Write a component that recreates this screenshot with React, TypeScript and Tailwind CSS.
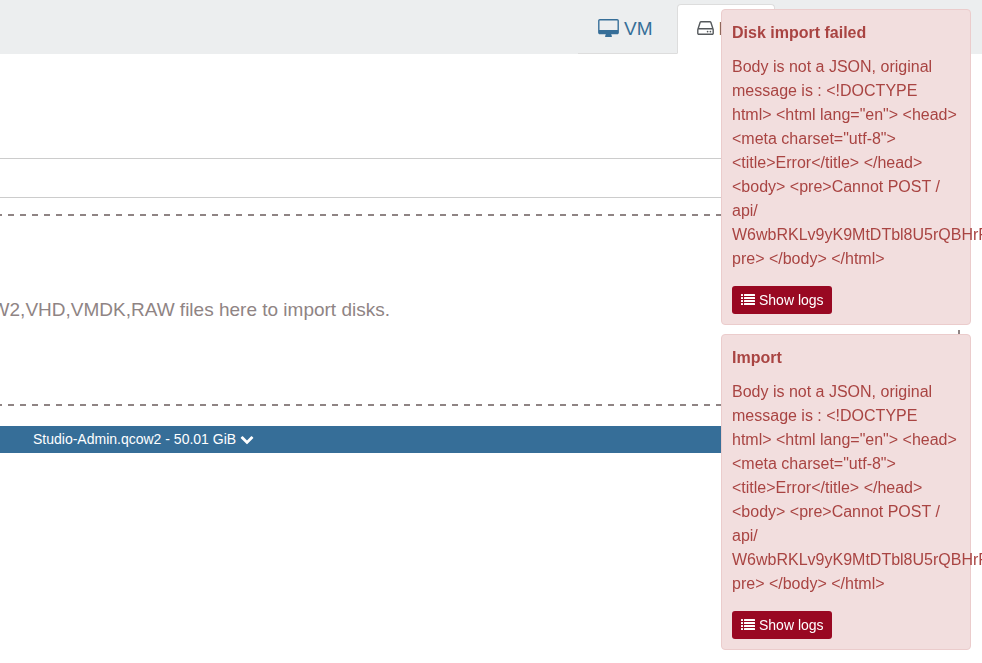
import { Fragment, useState } from "react";

const tabs = [
  { href: "#vm", label: "VM", icon: DesktopIcon },
  { href: "#disk", label: "Disk", icon: HddIcon },
] as const;

const message =
  'Body is not a JSON, original message is : <!DOCTYPE html> <html lang="en"> <head> <meta charset="utf-8"> <title>Error</title> </head> <body> <pre>Cannot POST /api/W6wbRKLv9yK9MtDTbl8U5rQBHrPcXq</pre> </body> </html>';

const notifications = [
  { title: "Disk import failed", body: message },
  { title: "Import", body: message },
];

function DesktopIcon() {
  return (
    <svg viewBox="0 0 1920 1664" className="mb-0.5 h-[18px] w-[21px]" fill="currentColor" aria-hidden="true">
      <path d="M1792 992v-832q0-13-9.5-22.5t-22.5-9.5h-1600q-13 0-22.5 9.5t-9.5 22.5v832q0 13 9.5 22.5t22.5 9.5h1600q13 0 22.5-9.5t9.5-22.5zM1920 160v1088q0 66-47 113t-113 47h-544q0 37 16 77.5t32 71 16 43.5q0 26-19 45t-45 19h-512q-26 0-45-19t-19-45q0-14 16-44t32-70 16-78h-544q-66 0-113-47t-47-113v-1088q0-66 47-113t113-47h1600q66 0 113 47t47 113z" />
    </svg>
  );
}

function HddIcon() {
  return (
    <svg viewBox="0 256 1536 1280" className="mb-0.5 h-[14px] w-[17px]" fill="currentColor" aria-hidden="true">
      <circle cx="960" cy="1216" r="80" />
      <circle cx="1216" cy="1216" r="80" />
      <path d="M1408 1376v-320q0-13-9.5-22.5t-22.5-9.5h-1216q-13 0-22.5 9.5t-9.5 22.5v320q0 13 9.5 22.5t22.5 9.5h1216q13 0 22.5-9.5t9.5-22.5zm-1230-480h1180l-157-482q-4-13-16-21.5t-26-8.5h-782q-14 0-26 8.5t-16 21.5zm1358 160v320q0 66-47 113t-113 47h-1216q-66 0-113-47t-47-113v-320q0-25 16-75l197-606q17-53 63-86t101-33h782q55 0 101 33t63 86l197 606q16 50 16 75z" />
    </svg>
  );
}

function ListIcon() {
  return (
    <svg viewBox="0 0 14 11" className="mb-0.5 h-[11px] w-[14px]" fill="currentColor" aria-hidden="true">
      {[0, 3, 6, 9].map((y) => (
        <g key={y}>
          <rect x="0" y={y} width="2" height="2" rx="0.2" />
          <rect x="3" y={y} width="11" height="2" rx="0.2" />
        </g>
      ))}
    </svg>
  );
}

function ChevronIcon() {
  return (
    <svg viewBox="0 0 1792 1792" className="size-[14px]" fill="currentColor" aria-hidden="true">
      <path d="M1683 808l-742 741q-19 19-45 19t-45-19l-742-741q-19-19-19-45.5t19-45.5l166-165q19-19 45-19t45 19l531 531 531-531q19-19 45-19t45 19l166 165q19 19 19 45.5t-19 45.5z" />
    </svg>
  );
}

function Header() {
  const [active, setActive] = useState("#disk");

  return (
    <header className="bg-[#eceeef] pt-1 pr-[22px] pl-[578px]">
      <nav className="flex gap-1 border-b border-[#dddddd]">
        {tabs.map((t) => (
          <a
            key={t.href}
            href={t.href}
            onClick={() => setActive(t.href)}
            className={`-mb-px flex h-[50px] items-center gap-[5px] rounded-t border px-[19px] text-[19px] ${
              active === t.href
                ? "border-[#dddddd] border-b-white bg-white text-[#55595c]"
                : "border-transparent text-[#366e98]"
            }`}
          >
            <t.icon />
            {t.label}
          </a>
        ))}
      </nav>
    </header>
  );
}

function Notification({ title, body }: { title: string; body: string }) {
  return (
    <section className="rounded border border-[#ebcccc] bg-[#f2dede] px-[10px] pt-[11px] pb-[10px] leading-6 text-[#a94442]">
      <h2 className="font-bold">{title}</h2>
      {/* long paths may wrap after a slash */}
      <p className="mt-[10px] mb-[15px]">
        {body.split("/").map((part, i) => (
          <Fragment key={i}>
            {i > 0 && (
              <>
                /<wbr />
              </>
            )}
            {part}
          </Fragment>
        ))}
      </p>
      <button className="flex h-7 items-center gap-1 rounded-[3px] bg-[#990822] pr-2 pl-[9px] text-sm text-white">
        <ListIcon />
        Show logs
      </button>
    </section>
  );
}

export default function App() {
  const [open, setOpen] = useState(false);

  return (
    <div className="min-h-screen overflow-hidden bg-white font-['Liberation_Sans',Arial,sans-serif] text-base">
      <Header />

      <main className="pr-[22px]">
        <div className="mt-[104px] h-10 border-y border-[#cccccc]" />

        {/* Drop zone, dashed on the top, bottom and right */}
        <div className="mt-4 flex h-48 items-center bg-[linear-gradient(90deg,#8f8484_50%,transparent_50%),linear-gradient(90deg,#8f8484_50%,transparent_50%),linear-gradient(#8f8484_50%,transparent_50%)] bg-[length:12px_2px,12px_2px,2px_12px] bg-[position:8px_0,8px_100%,100%_8px] [background-repeat:repeat-x,repeat-x,repeat-y]">
          <p className="flex w-[390px] justify-end overflow-hidden text-[19px] whitespace-nowrap text-[#8f8484]">
            Drop OVA,QCOW2,VHD,VMDK,RAW files here to import disks.
          </p>
        </div>

        <button
          onClick={() => setOpen(!open)}
          aria-expanded={open}
          className="mt-5 flex h-[27px] w-full items-center gap-1 bg-[#366e98] pb-0.5 pl-[33px] text-sm text-white"
        >
          Studio-Admin.qcow2 - 50.01 GiB
          <ChevronIcon />
        </button>
      </main>

      {/* Notifications */}
      <aside className="fixed top-[9px] right-[11px] flex w-[250px] flex-col gap-[9px]">
        {notifications.map((n) => (
          <Notification key={n.title} title={n.title} body={n.body} />
        ))}
      </aside>
    </div>
  );
}
